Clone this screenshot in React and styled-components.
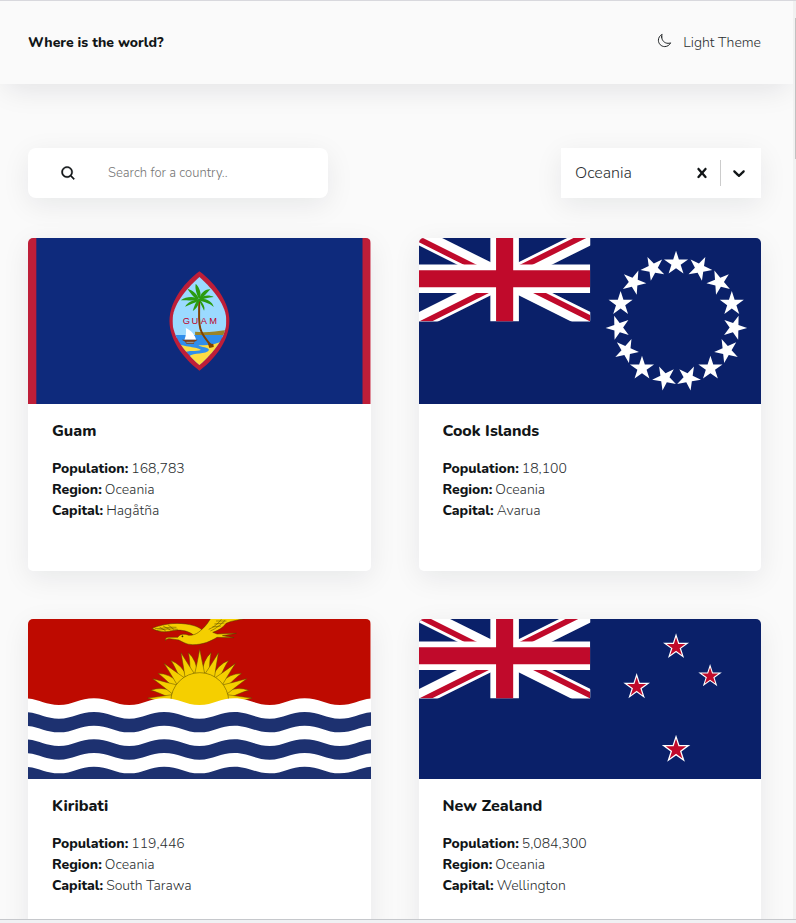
import React, { useRef, useState } from "react";
import styled, { createGlobalStyle } from "styled-components";
import { IoMoonOutline } from "react-icons/io5";
import { BiSearch } from "react-icons/bi";

const GlobalStyle = createGlobalStyle`
  *, *::before, *::after { box-sizing: border-box; }
  body {
    margin: 0;
    background: #fafafa;
    color: #111517;
    font-family: "Nunito", "Nunito Sans", "Open Sans", sans-serif;
    font-size: 14px;
    font-weight: 300;
  }
  button, input, select { font: inherit; color: inherit; }
`;

const Frame = styled.div`
  display: flex;
  flex-direction: column;
  height: 100vh;
  border-top: 1px solid #d8d8dd;
`;

const Viewport = styled.div`
  display: flex;
  flex: 1;
  min-height: 0;
`;

const Page = styled.div`
  flex: 1;
  min-width: 0;
  overflow-y: auto;
  scrollbar-width: none;
`;

const ScrollTrack = styled.div`
  width: 3px;
  padding: 17px 0 0 2px;
  background: #f1f1f1;
`;

const ScrollThumb = styled.div`
  height: 141px;
  background: #c1c1c1;
`;

const StatusEdge = styled.div`
  height: 4px;
  border-top: 1px solid #c6c8cc;
  background: #f0f1f3;
`;

const Header = styled.header`
  display: flex;
  align-items: center;
  justify-content: space-between;
  height: 83px;
  padding: 0 32px 0 28px;
  background: #fafafa;
  box-shadow: 0 10px 30px -6px rgba(17, 21, 40, 0.11);
`;

const Brand = styled.h1`
  margin: 0;
  font-size: 14px;
  line-height: 20px;
  font-weight: 800;
`;

const ThemeButton = styled.button`
  display: flex;
  align-items: center;
  gap: 11px;
  padding: 0;
  border: 0;
  background: none;
  color: #2b2f31;
  line-height: 20px;
  cursor: pointer;

  svg { margin-bottom: 4px; color: #111517; }
`;

const Main = styled.main`
  padding: 64px 32px 48px 28px;
`;

const Filters = styled.div`
  display: flex;
  justify-content: space-between;
  margin-bottom: 40px;
`;

const Field = styled.div`
  display: flex;
  align-items: center;
  width: ${(p) => p.$width};
  height: 50px;
  padding-right: 4px;
  border-radius: ${(p) => p.$radius};
  background: #fff;
  box-shadow: 0 7px 28px rgba(17, 21, 40, 0.08);
`;

const SearchLabel = styled.label`
  display: flex;
  padding: 0 31px 0 32px;
`;

const SearchInput = styled.input`
  flex: 1;
  min-width: 0;
  padding: 0;
  border: 0;
  outline: 0;
  background: none;
  font-size: 13px;

  &::placeholder { color: #757575; opacity: 1; }
`;

const RegionSelect = styled.select`
  flex: 1;
  min-width: 0;
  padding: 0 14px;
  border: 0;
  outline: 0;
  background: none;
  appearance: none;
  color: #2b2f31;
  font-size: 16px;
`;

const IconButton = styled.button`
  display: flex;
  padding: 8px;
  border: 0;
  background: none;
  cursor: pointer;
`;

const Separator = styled.span`
  width: 1px;
  height: 26px;
  background: #ccc;
`;

const Cards = styled.div`
  display: grid;
  grid-template-columns: 1fr 1fr;
  gap: 48px;
`;

const Card = styled.article`
  overflow: hidden;
  border-radius: 5px;
  background: #fff;
  box-shadow: 0 7px 28px rgba(17, 21, 40, 0.08);
`;

const FlagArt = styled.svg`
  display: block;
  width: 100%;
  height: ${(p) => p.$height};
`;

const CardBody = styled.div`
  min-height: ${(p) => p.$height};
  padding: 16px 24px;
`;

const CardTitle = styled.h2`
  margin: 0 0 16px;
  font-size: 16px;
  line-height: 22px;
  font-weight: 800;
`;

const Facts = styled.dl`
  margin: 0;
  line-height: 21px;
`;

const Fact = styled.div`
  display: flex;
  gap: 3px;
`;

const Term = styled.dt`
  font-weight: 800;
`;

const Value = styled.dd`
  margin: 0;
  color: #2b2f31;
`;

const starPoints = (cx, cy, r, rot = 0) =>
  Array.from({ length: 10 }, (_, i) => {
    const a = ((rot + i * 36) * Math.PI) / 180;
    const d = i % 2 ? r * 0.382 : r;
    return `${(cx + d * Math.sin(a)).toFixed(1)},${(cy - d * Math.cos(a)).toFixed(1)}`;
  }).join(" ");

function UnionJack({ id, y }) {
  return (
    <g transform={`translate(27 ${y}) scale(8.55)`}>
      <clipPath id={`${id}-box`}>
        <path d="M0 0h60v30H0z" />
      </clipPath>
      <clipPath id={`${id}-diag`}>
        <path d="M30 15h30v15zv15H0zH0V0zV0h30z" />
      </clipPath>
      <g clipPath={`url(#${id}-box)`}>
        <path d="M0 0l60 30M60 0L0 30" stroke="#fff" strokeWidth="6" />
        <path d="M0 0l60 30M60 0L0 30" stroke="#c00a2b" strokeWidth="4" clipPath={`url(#${id}-diag)`} />
        <path d="M30 0v30M0 15h60" stroke="#fff" strokeWidth="10" />
        <path d="M30 0v30M0 15h60" stroke="#c00a2b" strokeWidth="6" />
      </g>
    </g>
  );
}

function GuamFlag(props) {
  return (
    <FlagArt viewBox="24 30 1029 498" preserveAspectRatio="none" role="img" aria-label="Flag of Guam" {...props}>
      <path d="M24 30h1029v498H24z" fill="#be1e38" />
      <path d="M49 30h980v498H49z" fill="#0e2a7c" />
      <clipPath id="guam-seal">
        <path d="M539 147C582 186 620 232 620 279S582 374 539 411C496 374 458 326 458 279S496 186 539 147z" />
      </clipPath>
      <path d="M539 130C592 170 629 226 629 279S592 388 539 428C486 388 449 332 449 279S486 170 539 130z" fill="#be1e38" />
      <g clipPath="url(#guam-seal)">
        <path d="M449 130h180v200H449z" fill="#9bdaff" />
        <path d="M449 321h180v110H449z" fill="#308eec" />
        <path d="M526 311C560 315 590 310 629 305V321H526z" fill="#9a8428" />
        <path d="M470 347C500 357 540 358 543 366C532 372 505 364 490 376L460 360z" fill="#fddc43" />
        <path d="M629 325C600 345 585 352 536 352C545 358 566 358 568 366C560 380 520 374 509 384L539 430L629 380z" fill="#fddc43" />
        <path d="M498 300C515 307 526 322 529 335H494C499 323 500 312 498 300z" fill="#fff" />
        <path d="M486 335H534L525 341H523V347H500L496 341z" fill="#804018" />
        <path d="M500 343h22" stroke="#9bdaff" strokeWidth="2" />
        <path d="M538 214C540 250 533 287 545 311C553 329 565 342 575 354" fill="none" stroke="#804000" strokeWidth="6" />
        <path d="M564 346L581 348L582 357L569 360z" fill="#804000" />
        <g fill="#2b9b10">
          <path d="M537 214C523 204 500 205 483 217C507 215 522 221 537 214z" />
          <path d="M537 212C531 196 519 187 503 182C515 200 524 211 537 214z" />
          <path d="M536 210C530 194 525 181 528 167C541 181 545 197 541 211z" />
          <path d="M539 213C542 197 554 183 572 184C562 194 550 209 540 215z" />
          <path d="M538 213C551 200 570 201 582 207C566 208 550 214 539 216z" />
          <path d="M538 213C558 210 578 220 582 237C568 224 552 223 538 217z" />
          <path d="M538 214C547 222 558 236 553 248C547 236 543 228 537 217z" />
          <path d="M539 214C539 229 531 242 519 249C523 235 527 224 534 215z" />
          <path d="M538 214C519 216 504 223 496 236C513 228 525 226 538 217z" />
        </g>
      </g>
      <g fill="#be0027" fontFamily="Liberation Sans, sans-serif" fontSize="28" textAnchor="middle">
        <text x="500" y="289">G</text>
        <text x="525" y="289">U</text>
        <text x="552" y="289">A</text>
        <text x="580" y="289">M</text>
      </g>
    </FlagArt>
  );
}

const COOK_STARS = [
  [797, 106, 0], [868, 121, 26], [926, 163, -22], [964, 227, 0], [972, 299, 19],
  [949, 368, -24], [900, 421, 0], [834, 450, 26], [763, 450, -26], [695, 421, 0],
  [648, 368, 24], [624, 299, -19], [631, 227, 0], [670, 163, 22], [728, 121, -26],
];

function CookFlag(props) {
  return (
    <FlagArt viewBox="27 30 1026 498" preserveAspectRatio="none" role="img" aria-label="Flag of the Cook Islands" {...props}>
      <path d="M27 30h1026v498H27z" fill="#0a2069" />
      <UnionJack id="cook" y={24} />
      {COOK_STARS.map(([x, y, rot]) => (
        <polygon key={`${x}-${y}`} points={starPoints(x, y, 38, rot)} fill="#fff" />
      ))}
    </FlagArt>
  );
}

const wavePath = (y) => {
  let d = `M-94 ${y}`;
  for (let i = 0; i < 6; i += 1) {
    d += "c42 0 63 -20 105 -20c43 0 64 20 106 20";
  }
  return `${d}V560H-94z`;
};

const polar = (r, deg) => {
  const a = (deg * Math.PI) / 180;
  return `${(540 + r * Math.sin(a)).toFixed(1)} ${(275 - r * Math.cos(a)).toFixed(1)}`;
};

function KiribatiFlag(props) {
  const straight = [-86, -64, -43, -21, 0, 21, 43, 64, 86];
  const wavy = [12, 34, 55, 76];
  return (
    <FlagArt viewBox="24 27 1029 480" preserveAspectRatio="none" role="img" aria-label="Flag of Kiribati" {...props}>
      <path d="M24 27h1029v480H24z" fill="#be0a00" />
      <g fill="#f5cf00" stroke="#5c4a00" strokeWidth="1.5" strokeLinejoin="round">
        {wavy.flatMap((a) =>
          [1, -1].map((s) => (
            <path
              key={a * s}
              d={`M${polar(84, s * (a - 7))}Q${polar(124, s * (a - 8))} ${polar(151, s * (a + 1))}Q${polar(130, s * (a + 1))} ${polar(84, s * (a + 8))}z`}
            />
          ))
        )}
        {straight.map((a) => (
          <path
            key={a}
            d={`M${polar(86, a - 10)}Q${polar(115, a - 4)} ${polar(157, a)}Q${polar(115, a + 4)} ${polar(86, a + 10)}z`}
          />
        ))}
        <circle cx="540" cy="275" r="87" />
      </g>
      <g fill="#f5cf00" stroke="#4d4000" strokeWidth="1.5" strokeLinejoin="round">
        <path d="M397 55C425 43 463 37 498 42C528 46 544 54 552 66L522 76C509 64 484 57 457 62C435 68 413 66 397 55z" />
        <path d="M437 92C436 84 440 81 450 82L474 82C480 72 493 70 507 76C533 76 542 61 555 50C564 41 570 28 577 20H690C670 31 640 29 619 40C610 53 597 61 579 67L592 72L650 70L608 77L643 83L592 82C572 94 551 104 519 104C500 104 489 96 477 90L450 86C443 86 439 87 437 92z" />
        <path d="M405 56C430 57 447 49 470 52M411 61C433 59 449 54 474 58M430 48L452 60M445 45L462 58M419 51L438 63M572 63C589 56 602 45 616 31M567 58C587 49 598 37 605 28M578 51L604 48M584 42L614 39M589 33L620 33" fill="none" />
        <circle cx="488" cy="79" r="2" fill="#111" />
      </g>
      {[285, 326, 367, 408, 449, 490].map((y, i) => (
        <path key={y} d={wavePath(y)} fill={i % 2 ? "#1d3170" : "#fff"} />
      ))}
    </FlagArt>
  );
}

const NZ_STARS = [[797, 111, 41], [679, 231, 42], [899, 199, 37], [797, 419, 45]];

function NewZealandFlag(props) {
  return (
    <FlagArt viewBox="27 27 1026 480" preserveAspectRatio="none" role="img" aria-label="Flag of New Zealand" {...props}>
      <path d="M27 27h1026v480H27z" fill="#0a2069" />
      <UnionJack id="nz" y={9} />
      {NZ_STARS.map(([x, y, r]) => (
        <g key={`${x}-${y}`}>
          <polygon points={starPoints(x, y, r)} fill="#fff" />
          <polygon points={starPoints(x, y, r * 0.72)} fill="#c00a2b" />
        </g>
      ))}
    </FlagArt>
  );
}

const COUNTRIES = [
  { name: "Guam", population: "168,783", capital: "Hagåtña", Flag: GuamFlag, flagHeight: "166px", bodyHeight: "167px" },
  { name: "Cook Islands", population: "18,100", capital: "Avarua", Flag: CookFlag, flagHeight: "166px", bodyHeight: "167px" },
  { name: "Kiribati", population: "119,446", capital: "South Tarawa", Flag: KiribatiFlag, flagHeight: "160px", bodyHeight: "160px" },
  { name: "New Zealand", population: "5,084,300", capital: "Wellington", Flag: NewZealandFlag, flagHeight: "160px", bodyHeight: "160px" },
];

function CountryCard({ country }) {
  const { name, population, capital, Flag, flagHeight, bodyHeight } = country;
  return (
    <Card>
      <Flag $height={flagHeight} />
      <CardBody $height={bodyHeight}>
        <CardTitle>{name}</CardTitle>
        <Facts>
          <Fact><Term>Population:</Term><Value>{population}</Value></Fact>
          <Fact><Term>Region:</Term><Value>Oceania</Value></Fact>
          <Fact><Term>Capital:</Term><Value>{capital}</Value></Fact>
        </Facts>
      </CardBody>
    </Card>
  );
}

export default function App() {
  const [region, setRegion] = useState("Oceania");
  const selectRef = useRef(null);
  return (
    <>
      <GlobalStyle />
      <Frame>
        <Viewport>
          <Page>
            <Header>
              <Brand>Where is the world?</Brand>
              <ThemeButton type="button">
                <IoMoonOutline size={15} aria-hidden="true" />
                Light Theme
              </ThemeButton>
            </Header>
            <Main>
              <Filters>
                <Field $width="300px" $radius="8px">
                  <SearchLabel htmlFor="search" aria-label="Search">
                    <BiSearch size={17} stroke="currentColor" strokeWidth={0.5} aria-hidden="true" />
                  </SearchLabel>
                  <SearchInput id="search" type="text" placeholder="Search for a country.." />
                </Field>
                <Field $width="200px" $radius="0">
                  <RegionSelect
                    ref={selectRef}
                    aria-label="Region"
                    value={region}
                    onChange={(e) => setRegion(e.target.value)}
                  >
                    <option value=""></option>
                    <option>Africa</option>
                    <option>Americas</option>
                    <option>Asia</option>
                    <option>Europe</option>
                    <option>Oceania</option>
                  </RegionSelect>
                  <IconButton type="button" aria-label="Clear region" onClick={() => setRegion("")}>
                    <svg width="20" height="20" viewBox="0 0 20 20" fill="#111517">
                      <path d="M14.348 14.849c-0.469 0.469-1.229 0.469-1.697 0l-2.651-3.030-2.651 3.029c-0.469 0.469-1.229 0.469-1.697 0-0.469-0.469-0.469-1.229 0-1.697l2.758-3.15-2.759-3.152c-0.469-0.469-0.469-1.228 0-1.697s1.228-0.469 1.697 0l2.652 3.031 2.651-3.031c0.469-0.469 1.228-0.469 1.697 0s0.469 1.229 0 1.697l-2.758 3.152 2.758 3.15c0.469 0.469 0.469 1.229 0 1.698z" />
                    </svg>
                  </IconButton>
                  <Separator />
                  <IconButton
                    type="button"
                    aria-label="Show regions"
                    onClick={() => selectRef.current.showPicker()}
                  >
                    <svg width="20" height="20" viewBox="0 0 20 20" fill="#111517">
                      <path d="M4.516 7.548c0.436-0.446 1.043-0.481 1.576 0l3.908 3.747 3.908-3.747c0.533-0.481 1.141-0.446 1.574 0 0.436 0.445 0.408 1.197 0 1.615-0.406 0.418-4.695 4.502-4.695 4.502-0.217 0.223-0.502 0.335-0.787 0.335s-0.57-0.112-0.789-0.335c0 0-4.287-4.084-4.695-4.502s-0.436-1.17 0-1.615z" />
                    </svg>
                  </IconButton>
                </Field>
              </Filters>
              <Cards>
                {COUNTRIES.map((country) => (
                  <CountryCard key={country.name} country={country} />
                ))}
              </Cards>
            </Main>
          </Page>
          <ScrollTrack>
            <ScrollThumb />
          </ScrollTrack>
        </Viewport>
        <StatusEdge />
      </Frame>
    </>
  );
}
